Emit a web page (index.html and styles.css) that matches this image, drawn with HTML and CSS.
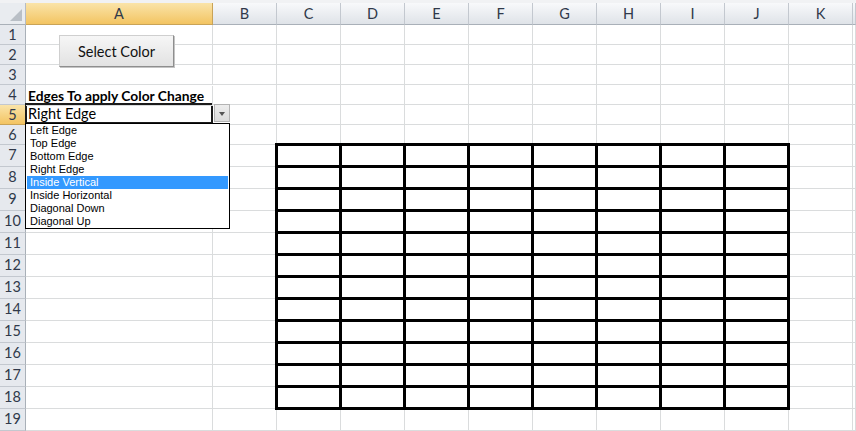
FILE: index.html
```html
<!DOCTYPE html>
<html lang="en">
<head>
    <meta charset="UTF-8">
    <title>Edges To apply Color Change</title>
    <link rel="stylesheet" href="styles.css">
</head>
<body>
    <div class="top-strip"></div>
    <div class="sheet" id="hoja">
        <button class="btn-color">Select Color</button>

        <div class="combo">
            <div class="combo-field">Right Edge</div>
            <div class="combo-arrow"></div>
            <ul class="combo-list">
                <li>Left Edge</li>
                <li>Top Edge</li>
                <li>Bottom Edge</li>
                <li>Right Edge</li>
                <li class="active">Inside Vertical</li>
                <li>Inside Horizontal</li>
                <li>Diagonal Down</li>
                <li>Diagonal Up</li>
            </ul>
        </div>

        <div class="thick-table" id="tabla"></div>
    </div>

    <script>
        // the last column is only a sliver at the edge, so it gets no letter
        const columnas = ["A", "B", "C", "D", "E", "F", "G", "H", "I", "J", "K", ""];
        const hoja = document.getElementById("hoja");

        function celda(clase, texto) {
            let d = document.createElement("div");
            d.className = "cell " + clase;
            d.textContent = texto;
            hoja.appendChild(d);
            return d;
        }

        celda("corner", "");
        columnas.forEach(c => celda("col-head" + (c === "A" ? " sel" : ""), c));

        for (let r = 1; r <= 19; r++) {
            celda("row-head" + (r === 5 ? " sel" : ""), r);
            columnas.forEach(c => {
                let texto = (r === 4 && c === "A") ? "Edges To apply Color Change" : "";
                celda(texto ? "bold" : "", texto);
            });
        }

        let tabla = document.getElementById("tabla");
        for (let i = 0; i < 8 * 12; i++) {
            let d = document.createElement("div");
            tabla.appendChild(d);
        }
    </script>
</body>
</html>
```

FILE: styles.css
```css
* {
    box-sizing: border-box;
    margin: 0;
    padding: 0;
}

body {
    width: 856px;
    height: 431px;
    overflow: hidden;
    background: #fff;
    font-family: Lato, "Open Sans", sans-serif;
    color: #000;
}

.top-strip {
    height: 3px;
    background: #f1f2f4;
}

.sheet {
    position: relative;
    display: grid;
    grid-template-columns: 26px 187px repeat(10, 64px) 1fr;
    grid-template-rows: 22px repeat(6, 20px) repeat(13, 22px);
}

.cell {
    border-right: 1px solid #dadcdd;
    border-bottom: 1px solid #dadcdd;
    font-size: 14.5px;
    white-space: nowrap;
}

.cell.bold {
    font-weight: 700;
    font-size: 13.8px;
    padding-left: 2px;
    line-height: 19px;
    position: relative;
    top: 1px;
}

.corner {
    position: relative;
    background: #e9ecf0;
    border-right-color: #b6bcc4;
    border-bottom-color: #a9b0b8;
}

.corner::after {
    content: "";
    position: absolute;
    right: 3px;
    bottom: 3px;
    width: 12px;
    height: 12px;
    background: #b9bfc6;
    clip-path: polygon(100% 0, 100% 100%, 0 100%);
}

.col-head {
    background: linear-gradient(#f8f9fb, #dfe3e8);
    border-right-color: #c3c8cf;
    border-bottom-color: #a9b0b8;
    text-align: center;
    line-height: 21px;
    color: #30394a;
}

.row-head {
    background: #e6e9ee;
    border-right-color: #a9b0b8;
    border-bottom-color: #c3c8cf;
    text-align: center;
    line-height: 20px;
    color: #30394a;
}

.col-head.sel,
.row-head.sel {
    background: linear-gradient(#fae4a9, #f3c462);
    border-right-color: #c9a357;
    border-bottom-color: #c9a357;
}

.btn-color {
    position: absolute;
    grid-column: 2;
    grid-row: 2 / 5;
    left: 33px;
    top: 10px;
    width: 115px;
    height: 32px;
    font-family: Lato, "Open Sans", sans-serif;
    font-size: 14.5px;
    color: #111;
    background: linear-gradient(#f6f6f6, #e2e2e2);
    border: 1px solid #cfcfcf;
    border-right-color: #8e8e8e;
    border-bottom-color: #8e8e8e;
    box-shadow: 1px 1px 0 #c4c4c4;
}

.combo {
    position: absolute;
    grid-column: 2 / 4;
    grid-row: 6;
    left: -1px;
    top: -2px;
    width: 206px;
    height: 21px;
    display: flex;
    gap: 1px;
}

.combo-field {
    width: 188px;
    border: 2px solid #1b1b1b;
    font-size: 14.5px;
    line-height: 17px;
    padding-left: 1px;
    background: #fff;
}

.combo-arrow {
    position: relative;
    width: 16px;
    height: 18px;
    margin-top: 1px;
    background: linear-gradient(#ededed, #dcdcdc);
    border: 1px solid #b3b3b3;
}

.combo-arrow::after {
    content: "";
    position: absolute;
    left: 4px;
    top: 7px;
    border-left: 3.5px solid transparent;
    border-right: 3.5px solid transparent;
    border-top: 4px solid #555;
}

.combo-list {
    position: absolute;
    left: 0;
    top: 20px;
    width: 205px;
    list-style: none;
    background: #fff;
    border: 1px solid #000;
    font-family: "Liberation Sans", Arial, sans-serif;
    font-size: 11px;
}

.combo-list li {
    height: 13px;
    line-height: 13px;
    padding-left: 3px;
    margin: 0 1px;
}

.combo-list li.active {
    background: #3399ff;
    color: #fff;
}

.thick-table {
    position: absolute;
    grid-column: 4 / 12;
    grid-row: 8 / 20;
    top: -2px;
    left: -2px;
    right: -1px;
    bottom: -1px;
    display: grid;
    grid-template-columns: repeat(8, 1fr);
    grid-template-rows: repeat(12, 1fr);
    gap: 3px;
    padding: 3px;
    background: #000;
}

.thick-table div {
    background: #fff;
}
```
